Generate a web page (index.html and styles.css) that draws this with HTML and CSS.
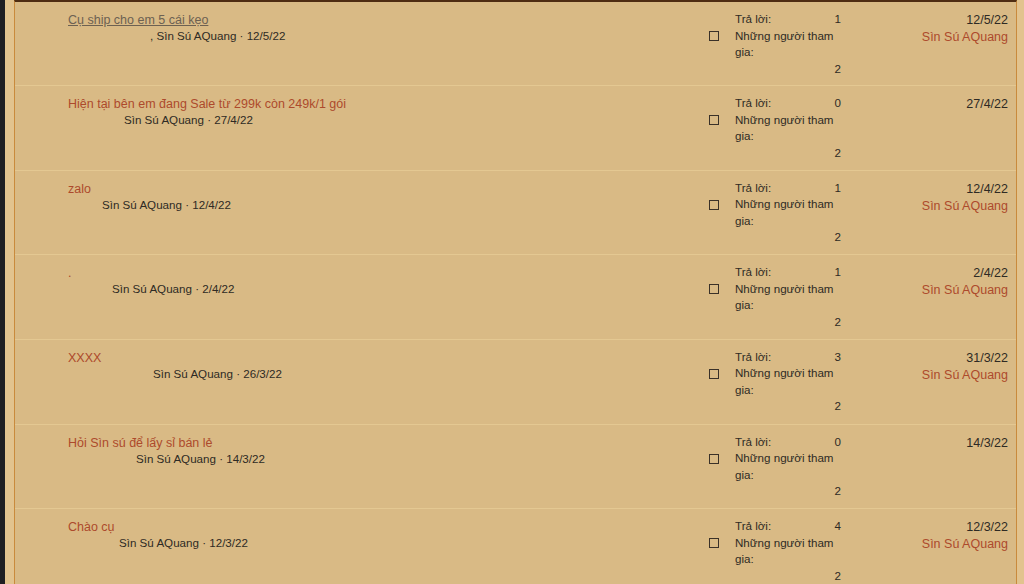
FILE: index.html
```html
<!DOCTYPE html>
<html lang="vi">
<head>
  <meta charset="UTF-8" />
  <meta name="viewport" content="width=device-width, initial-scale=1.0"/>
  <title>Chủ đề</title>
  <link rel="stylesheet" href="styles.css">
</head>
<body>

  <div class="thread-list">

    <div class="thread">
      <div class="thread-main">
        <a class="thread-title visited" href="#">Cụ ship cho em 5 cái kẹo</a>
        <div class="thread-meta"><span class="lead lead-1"></span>, Sìn Sú AQuang · 12/5/22</div>
      </div>
      <div class="thread-status"><span class="box"></span></div>
      <dl class="thread-stats">
        <div class="pair"><dt>Trả lời:</dt><dd>1</dd></div>
        <div class="pair"><dt>Những người tham gia:</dt><dd>2</dd></div>
      </dl>
      <div class="thread-latest">
        <div class="latest-date">12/5/22</div>
        <div class="latest-user">Sìn Sú AQuang</div>
      </div>
    </div>

    <div class="thread">
      <div class="thread-main">
        <a class="thread-title" href="#">Hiện tại bên em đang Sale từ 299k còn 249k/1 gói</a>
        <div class="thread-meta"><span class="lead lead-2"></span>Sìn Sú AQuang · 27/4/22</div>
      </div>
      <div class="thread-status"><span class="box"></span></div>
      <dl class="thread-stats">
        <div class="pair"><dt>Trả lời:</dt><dd>0</dd></div>
        <div class="pair"><dt>Những người tham gia:</dt><dd>2</dd></div>
      </dl>
      <div class="thread-latest">
        <div class="latest-date">27/4/22</div>
      </div>
    </div>

    <div class="thread">
      <div class="thread-main">
        <a class="thread-title" href="#">zalo</a>
        <div class="thread-meta"><span class="lead lead-3"></span>Sìn Sú AQuang · 12/4/22</div>
      </div>
      <div class="thread-status"><span class="box"></span></div>
      <dl class="thread-stats">
        <div class="pair"><dt>Trả lời:</dt><dd>1</dd></div>
        <div class="pair"><dt>Những người tham gia:</dt><dd>2</dd></div>
      </dl>
      <div class="thread-latest">
        <div class="latest-date">12/4/22</div>
        <div class="latest-user">Sìn Sú AQuang</div>
      </div>
    </div>

    <div class="thread">
      <div class="thread-main">
        <a class="thread-title" href="#">.</a>
        <div class="thread-meta"><span class="lead lead-4"></span>Sìn Sú AQuang · 2/4/22</div>
      </div>
      <div class="thread-status"><span class="box"></span></div>
      <dl class="thread-stats">
        <div class="pair"><dt>Trả lời:</dt><dd>1</dd></div>
        <div class="pair"><dt>Những người tham gia:</dt><dd>2</dd></div>
      </dl>
      <div class="thread-latest">
        <div class="latest-date">2/4/22</div>
        <div class="latest-user">Sìn Sú AQuang</div>
      </div>
    </div>

    <div class="thread">
      <div class="thread-main">
        <a class="thread-title" href="#">XXXX</a>
        <div class="thread-meta"><span class="lead lead-5"></span>Sìn Sú AQuang · 26/3/22</div>
      </div>
      <div class="thread-status"><span class="box"></span></div>
      <dl class="thread-stats">
        <div class="pair"><dt>Trả lời:</dt><dd>3</dd></div>
        <div class="pair"><dt>Những người tham gia:</dt><dd>2</dd></div>
      </dl>
      <div class="thread-latest">
        <div class="latest-date">31/3/22</div>
        <div class="latest-user">Sìn Sú AQuang</div>
      </div>
    </div>

    <div class="thread">
      <div class="thread-main">
        <a class="thread-title" href="#">Hỏi Sìn sú để lấy sỉ bán lẻ</a>
        <div class="thread-meta"><span class="lead lead-6"></span>Sìn Sú AQuang · 14/3/22</div>
      </div>
      <div class="thread-status"><span class="box"></span></div>
      <dl class="thread-stats">
        <div class="pair"><dt>Trả lời:</dt><dd>0</dd></div>
        <div class="pair"><dt>Những người tham gia:</dt><dd>2</dd></div>
      </dl>
      <div class="thread-latest">
        <div class="latest-date">14/3/22</div>
      </div>
    </div>

    <div class="thread">
      <div class="thread-main">
        <a class="thread-title" href="#">Chào cụ</a>
        <div class="thread-meta"><span class="lead lead-7"></span>Sìn Sú AQuang · 12/3/22</div>
      </div>
      <div class="thread-status"><span class="box"></span></div>
      <dl class="thread-stats">
        <div class="pair"><dt>Trả lời:</dt><dd>4</dd></div>
        <div class="pair"><dt>Những người tham gia:</dt><dd>2</dd></div>
      </dl>
      <div class="thread-latest">
        <div class="latest-date">12/3/22</div>
        <div class="latest-user">Sìn Sú AQuang</div>
      </div>
    </div>

  </div>

</body>
</html>
```

FILE: styles.css
```css
body {
  margin: 0;
  background-color: #e2c38e;
  border-left: 5px solid #1f1f22;
  font-family: 'Liberation Sans', Arial, sans-serif;
  font-size: 11.6px;
  color: #2e2a24;
  height: 584px;
  overflow: hidden;
}

.thread-list {
  margin-left: 9px;
  width: 1001px;
  background-color: #d9ba85;
  border-left: 1px solid #c98a3c;
  border-right: 1px solid #c98a3c;
  border-top: 2px solid #4e2c12;
  min-height: 100%;
}

.thread {
  display: flex;
  height: 84.67px;
  border-top: 1px solid #e4c892;
  box-sizing: border-box;
}

.thread:first-child {
  border-top: none;
  height: 83px;
}

.thread-main {
  flex: 1;
  padding: 10px 0 0 53px;
}

.thread-title {
  font-size: 12.5px;
  color: #ad4a2c;
  text-decoration: none;
  line-height: 16px;
}

.thread-title.visited {
  color: #6d6152;
  text-decoration: underline;
}

.thread-meta {
  line-height: 16px;
  color: #2e2a24;
}

.lead {
  display: inline-block;
}

.lead-1 { width: 82px; }
.lead-2 { width: 56px; }
.lead-3 { width: 34px; }
.lead-4 { width: 44px; }
.lead-5 { width: 85px; }
.lead-6 { width: 68px; }
.lead-7 { width: 51px; }

.thread-status {
  width: 35px;
  padding: 29px 0 0 9px;
  box-sizing: border-box;
}

.box {
  display: block;
  width: 10px;
  height: 10px;
  border: 1px solid #3a3128;
  box-sizing: border-box;
}

.thread-stats {
  width: 106px;
  margin: 0;
  padding-top: 9px;
  line-height: 16.5px;
}

.pair {
  display: flex;
  flex-wrap: wrap;
  justify-content: space-between;
}

.pair dt {
  margin: 0;
}

.pair dd {
  margin: 0 0 0 auto;
}

.thread-latest {
  width: 167px;
  padding: 10px 8px 0 0;
  text-align: right;
  line-height: 17px;
  font-size: 12.5px;
}

.latest-user {
  color: #ad4a2c;
}
```
